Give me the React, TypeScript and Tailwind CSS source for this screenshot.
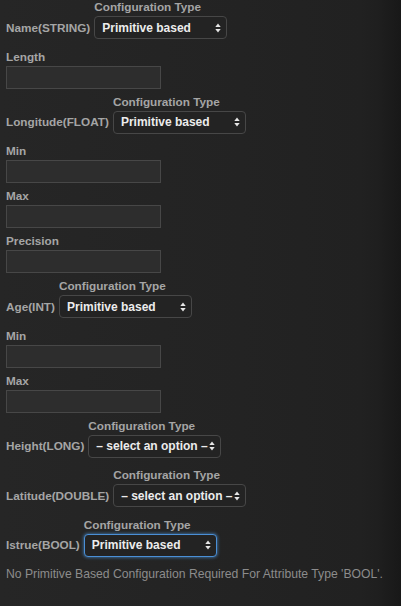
import type React from 'react';

type Field = { label: string };

type Attribute = {
  name: string;
  value: string;
  focused?: boolean;
  fields: Field[];
};

const attributes: Attribute[] = [
  { name: 'Name(STRING)', value: 'Primitive based', fields: [{ label: 'Length' }] },
  {
    name: 'Longitude(FLOAT)',
    value: 'Primitive based',
    fields: [{ label: 'Min' }, { label: 'Max' }, { label: 'Precision' }],
  },
  { name: 'Age(INT)', value: 'Primitive based', fields: [{ label: 'Min' }, { label: 'Max' }] },
  { name: 'Height(LONG)', value: '– select an option –', fields: [] },
  { name: 'Latitude(DOUBLE)', value: '– select an option –', fields: [] },
  { name: 'Istrue(BOOL)', value: 'Primitive based', focused: true, fields: [] },
];

const Arrows = () => (
  <svg width="6" height="10" viewBox="0 0 6 10" className="shrink-0">
    <path d="M3 0.5 L5.7 4 L0.3 4 Z" fill="#e6e6e6" />
    <path d="M3 9.5 L5.7 6 L0.3 6 Z" fill="#e6e6e6" />
  </svg>
);

const Select: React.FC<{ value: string; focused?: boolean }> = ({ value, focused }) => (
  <div
    className={
      focused
        ? 'flex h-[23px] w-[133px] items-center justify-between rounded-[4px] border border-[#4a8fd6] bg-[#232323] pl-[7px] pr-[5px] shadow-[0_0_3px_1px_rgba(74,143,214,0.55)]'
        : 'flex h-[23px] w-[133px] items-center justify-between rounded-[4px] border border-[#474747] bg-[#232323] pl-[7px] pr-[5px]'
    }
  >
    <span className="whitespace-nowrap text-[12px] font-bold text-[#ececec]">{value}</span>
    <Arrows />
  </div>
);

export default function App() {
  return (
    <div className="min-h-[606px] w-[401px] bg-[linear-gradient(to_right,#262626_0%,#232323_60%,#212121_90%,#1f1f1f_94%,#181818_100%)] px-[6px] font-['Liberation_Sans',Arial,sans-serif]">
      {attributes.map((attr) => (
        <div key={attr.name}>
          <div className="mb-[10.5px] flex items-end gap-[4px]">
            <span className="flex h-[23px] items-center whitespace-nowrap text-[11.75px] font-bold text-[#a5a5a5]">
              {attr.name}
            </span>
            <div className="flex flex-col gap-[2px]">
              <span className="h-[14px] whitespace-nowrap text-[11.75px] font-bold leading-[14px] text-[#a5a5a5]">
                Configuration Type
              </span>
              <Select value={attr.value} focused={attr.focused} />
            </div>
          </div>
          {attr.fields.map((field) => (
            <div key={field.label} className="mb-[6px] flex flex-col gap-[2px]">
              <span className="h-[14px] text-[11.75px] font-bold leading-[14px] text-[#a5a5a5]">
                {field.label}
              </span>
              <input
                type="text"
                className="h-[23px] w-[155px] border border-[#474747] bg-[#2d2d2d] outline-none"
              />
            </div>
          ))}
        </div>
      ))}
      <p className="text-[12.2px] leading-[14px] text-[#8c8c8c]">
        No Primitive Based Configuration Required For Attribute Type 'BOOL'.
      </p>
    </div>
  );
}
